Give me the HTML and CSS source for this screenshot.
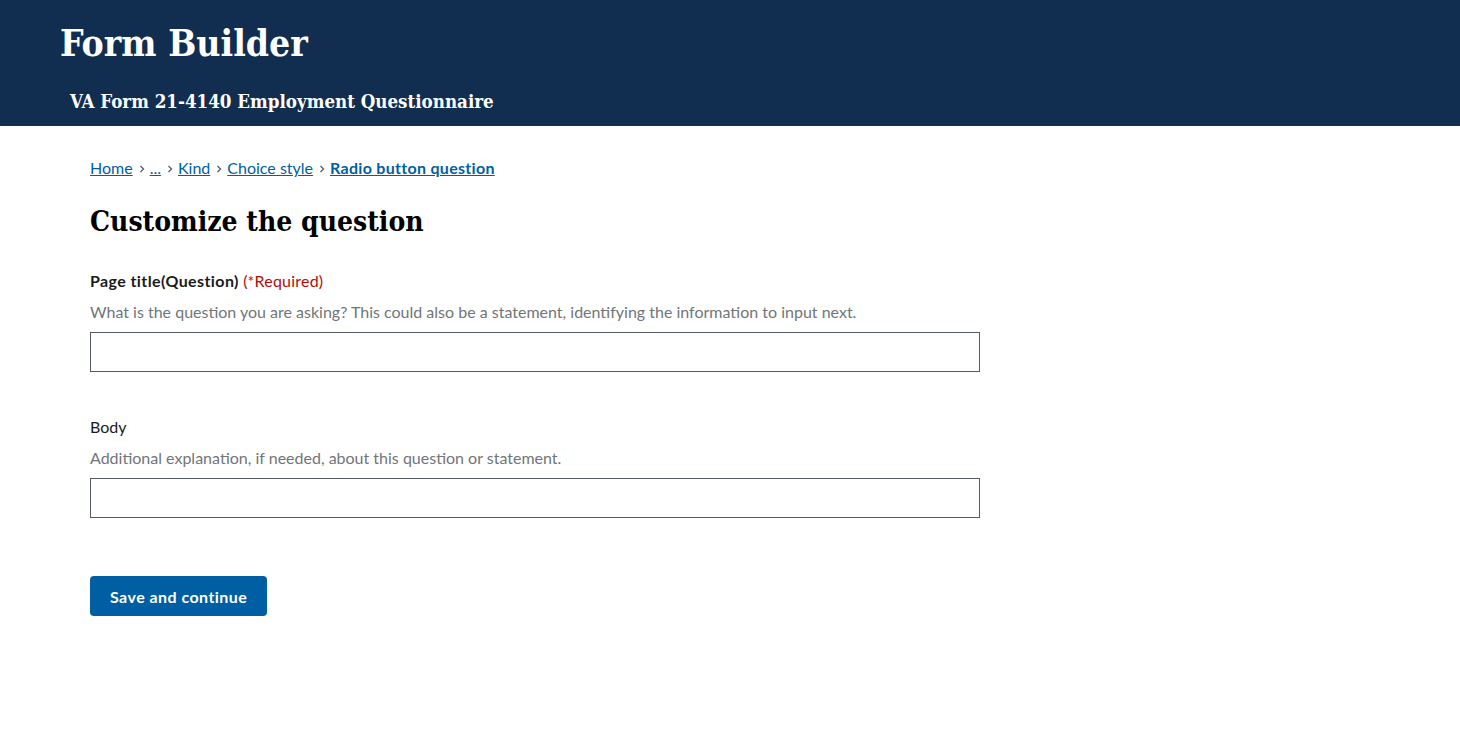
FILE: index.html
```html
<!DOCTYPE html>
<html lang="en">
<head>
<meta charset="utf-8">
<title>Form Builder</title>
<link rel="stylesheet" href="styles.css">
</head>
<body>
<header class="site-header">
  <div class="site-title">Form Builder</div>
  <div class="form-name">VA Form 21-4140 Employment Questionnaire</div>
</header>
<main class="main">
  <nav class="breadcrumbs" aria-label="Breadcrumb">
    <a href="#">Home</a><svg class="sep" viewBox="0 0 8 8" width="8" height="8"><path d="M2.5 1 L5.5 4 L2.5 7" fill="none" stroke="#565c65" stroke-width="1.3"/></svg>
    <a href="#">...</a><svg class="sep" viewBox="0 0 8 8" width="8" height="8"><path d="M2.5 1 L5.5 4 L2.5 7" fill="none" stroke="#565c65" stroke-width="1.3"/></svg>
    <a href="#">Kind</a><svg class="sep" viewBox="0 0 8 8" width="8" height="8"><path d="M2.5 1 L5.5 4 L2.5 7" fill="none" stroke="#565c65" stroke-width="1.3"/></svg>
    <a href="#">Choice style</a><svg class="sep" viewBox="0 0 8 8" width="8" height="8"><path d="M2.5 1 L5.5 4 L2.5 7" fill="none" stroke="#565c65" stroke-width="1.3"/></svg>
    <a href="#" class="current">Radio button question</a>
  </nav>
  <h1 class="page-heading">Customize the question</h1>
  <form class="form">
    <div class="field">
      <label class="label label-bold">Page title(Question) <span class="required">(*Required)</span></label>
      <div class="hint">What is the question you are asking? This could also be a statement, identifying the information to input next.</div>
      <input class="text-input" type="text">
    </div>
    <div class="field">
      <label class="label">Body</label>
      <div class="hint">Additional explanation, if needed, about this question or statement.</div>
      <input class="text-input" type="text">
    </div>
    <button type="button" class="button">Save and continue</button>
  </form>
</main>
</body>
</html>
```
FILE: styles.css
```css
* { box-sizing: border-box; }
html, body { margin: 0; padding: 0; }
body {
  font-family: "Source Sans Pro", Lato, "Noto Sans", sans-serif;
  color: #1b1b1b;
  background: #fff;
}
.site-header {
  background: #112e51;
  height: 126px;
  color: #fff;
  padding: 17px 0 0 60px;
  display: flex;
  flex-direction: column;
}
.site-title {
  font-family: "DejaVu Serif Condensed", "DejaVu Serif", serif;
  font-stretch: condensed;
  font-weight: bold;
  font-size: 37px;
  line-height: 52px;
}
.form-name {
  font-family: "DejaVu Serif Condensed", "DejaVu Serif", serif;
  font-stretch: condensed;
  font-weight: bold;
  font-size: 18.6px;
  line-height: 24px;
  margin: 21px 0 0 10px;
}
.main {
  padding: 30px 0 0 90px;
}
.breadcrumbs {
  font-size: 16px;
  line-height: 24px;
  display: flex;
  align-items: center;
}
.breadcrumbs a {
  color: #005ea2;
  text-decoration: underline;
}
.breadcrumbs .current { font-weight: bold; letter-spacing: 0.3px; }
.breadcrumbs .sep {
  margin: 1px 4px 0 5px;
  flex: none;
}
.page-heading {
  font-family: "DejaVu Serif Condensed", "DejaVu Serif", serif;
  font-stretch: condensed;
  font-weight: bold;
  font-size: 28px;
  line-height: 40px;
  margin: 22px 0 0 0;
  color: #000;
}
.form { width: 890px; }
.field { margin-top: 27px; }
.field + .field { margin-top: 43px; }
.label {
  display: block;
  font-size: 16px;
  line-height: 24px;
}
.label-bold { font-weight: bold; letter-spacing: 0.4px; }
.required { color: #b50909; font-weight: normal; letter-spacing: 0.2px; }
.hint {
  color: #71767a;
  font-size: 16px;
  line-height: 24px;
  margin-top: 7px;
}
.text-input {
  display: block;
  width: 890px;
  height: 40px;
  border: 1px solid #565c65;
  margin-top: 8px;
  font-size: 16px;
  padding: 8px;
  border-radius: 0;
}
.button {
  margin-top: 58px;
  background: #005ea2;
  color: #fff;
  border: 0;
  border-radius: 4px;
  height: 40px;
  padding: 0 20px;
  font-family: inherit;
  font-weight: bold;
  font-size: 16px;
  letter-spacing: 0.45px;
}
```
